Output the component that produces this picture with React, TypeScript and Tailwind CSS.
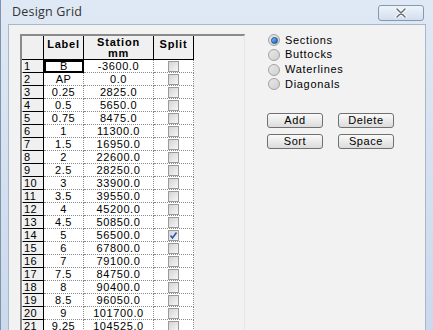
import React from 'react'

const rows: [string, string, boolean][] = [
  ['B', '-3600.0', false],
  ['AP', '0.0', false],
  ['0.25', '2825.0', false],
  ['0.5', '5650.0', false],
  ['0.75', '8475.0', false],
  ['1', '11300.0', false],
  ['1.5', '16950.0', false],
  ['2', '22600.0', false],
  ['2.5', '28250.0', false],
  ['3', '33900.0', false],
  ['3.5', '39550.0', false],
  ['4', '45200.0', false],
  ['4.5', '50850.0', false],
  ['5', '56500.0', true],
  ['6', '67800.0', false],
  ['7', '79100.0', false],
  ['7.5', '84750.0', false],
  ['8', '90400.0', false],
  ['8.5', '96050.0', false],
  ['9', '101700.0', false],
  ['9.25', '104525.0', false],
]

const options = ['Sections', 'Buttocks', 'Waterlines', 'Diagonals']

function Check({ on }: { on: boolean }) {
  return (
    <div className="w-[11px] h-[11px] border border-[#9a9a9a] bg-gradient-to-br from-[#d4d4d4] to-[#f6f6f6] relative">
      {on && (
        <svg width="11" height="11" viewBox="0 0 11 11" className="absolute -left-px -top-px">
          <path d="M2.5 5.5 L4.5 8 L8.5 2.5" stroke="#2b55b5" strokeWidth="1.6" fill="none" />
        </svg>
      )}
    </div>
  )
}

function Radio({ on }: { on: boolean }) {
  return (
    <div className="w-[12px] h-[12px] rounded-full border border-[#a2a2a2] bg-gradient-to-br from-[#e8e8e8] to-[#d0d0d0] flex items-center justify-center">
      {on && <div className="w-[7px] h-[7px] rounded-full bg-gradient-to-br from-[#7fc4ff] to-[#0a5cb8] border border-[#1e4f8f]" />}
    </div>
  )
}

function Btn({ label }: { label: string }) {
  return (
    <div className="w-[56px] h-[15px] rounded-[3px] border border-[#707070] bg-gradient-to-b from-[#fafafa] to-[#dcdcdc] flex items-center justify-center text-[11px] leading-none tracking-[0.6px] text-black">
      {label}
    </div>
  )
}

export default function App() {
  return (
    <div className="w-[433px] h-[330px] overflow-hidden bg-gradient-to-b from-[#dfe9f5] to-[#cad9ed] flex flex-col border-l border-[#8392a8]" style={{ fontFamily: '"Liberation Sans", Arial, sans-serif' }}>
      <div className="h-[24px] flex items-center justify-between pl-[11px] pr-[9px] shrink-0">
        <span className="text-[12.5px] text-[#333] tracking-[0.2px]" style={{ fontFamily: '"Open Sans", "Noto Sans", sans-serif' }}>Design Grid</span>
        <div className="w-[46px] h-[16px] mt-[1px] rounded-[3px] border border-[#8797b0] bg-gradient-to-b from-[#eef3fa] to-[#d3deee] flex items-center justify-center">
          <svg width="14" height="10" viewBox="0 0 14 10">
            <path d="M3 1 L11 9 M11 1 L3 9" stroke="#fff" strokeWidth="3.4" strokeLinecap="round" />
            <path d="M3 1 L11 9 M11 1 L3 9" stroke="#6a6f78" strokeWidth="1.6" strokeLinecap="round" />
          </svg>
        </div>
      </div>
      <div className="flex-1 mx-[7px] bg-[#f2f2f2] border-x border-t border-[#a9b7c9] flex pl-[11px] pt-[9px]">
        <div className="w-[225px] border-t-2 border-l-2 border-[#8a8a8a] border-r border-r-[#e6e6e6] bg-[#f2f2f2] self-stretch">
          <div className="grid grid-cols-[22px_40px_70px_40px] text-[11px] text-black">
            <div className="h-[24px] bg-[#f0f0f0] border-r border-b border-black" />
            <div className="h-[24px] bg-[#f0f0f0] border-r border-b border-black flex justify-center pt-[2px] font-bold tracking-[0.8px] leading-[12px]">Label</div>
            <div className="h-[24px] bg-[#f0f0f0] border-r border-b border-black flex flex-col items-center pt-[1px] font-bold tracking-[0.8px] leading-[11px]">
              <span>Station</span>
              <span>mm</span>
            </div>
            <div className="h-[24px] bg-[#f0f0f0] border-r border-b border-black flex justify-center pt-[2px] font-bold tracking-[0.8px] leading-[12px]">Split</div>
            {rows.map(([label, station, split], i) => (
              <React.Fragment key={i}>
                <div className="h-[13px] bg-[#f0f0f0] border-r border-b border-black border-l border-l-white pl-[1px] leading-[12px] tracking-[0.5px]">{i + 1}</div>
                {i === 0 ? (
                  <div className="h-[13px] bg-white border-2 border-black flex items-center justify-center leading-none tracking-[0.5px]">{label}</div>
                ) : (
                  <div className="h-[13px] bg-white border-r border-b border-dotted border-[#8a8a8a] flex items-center justify-center leading-none tracking-[0.5px]">{label}</div>
                )}
                <div className="h-[13px] bg-white border-r border-b border-dotted border-[#8a8a8a] flex items-center justify-center leading-none tracking-[0.6px]">{station}</div>
                <div className="h-[13px] bg-white border-r border-b border-dotted border-[#8a8a8a] flex items-center justify-center">
                  <Check on={split} />
                </div>
              </React.Fragment>
            ))}
          </div>
        </div>
        <div className="flex flex-col pl-[23px] pt-0">
          <div className="flex flex-col gap-[2.8px]">
            {options.map((o, i) => (
              <div key={o} className="flex items-center gap-[5px] h-[12px]">
                <Radio on={i === 0} />
                <span className="text-[11px] tracking-[0.7px] leading-none text-black">{o}</span>
              </div>
            ))}
          </div>
          <div className="grid grid-cols-[56px_56px] gap-x-[15px] gap-y-[6px] mt-[23px] -ml-[1px]">
            <Btn label="Add" />
            <Btn label="Delete" />
            <Btn label="Sort" />
            <Btn label="Space" />
          </div>
        </div>
      </div>
    </div>
  )
}
